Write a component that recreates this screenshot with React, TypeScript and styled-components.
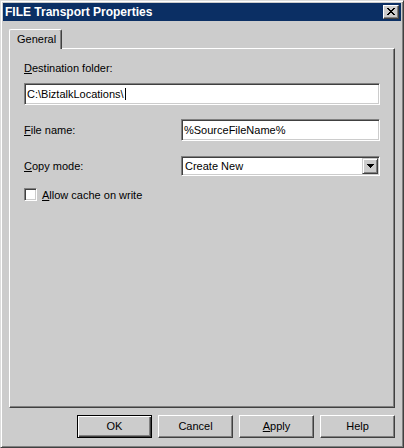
import React from "react";
import styled, { createGlobalStyle } from "styled-components";

const face = "#cccccc";

const GlobalStyle = createGlobalStyle`
  html, body {
    margin: 0;
    padding: 0;
    background: ${face};
  }
  body {
    font-family: "Liberation Sans", Arial, sans-serif;
    font-size: 11px;
    color: #000;
  }
`;

const Window = styled.div`
  width: 404px;
  height: 448px;
  box-sizing: border-box;
  background: ${face};
  border: 1px solid;
  border-color: #dcdcdc #404040 #404040 #dcdcdc;
  box-shadow: inset 1px 1px #fff, inset -1px -1px #808080;
  padding: 2px;
  display: flex;
  flex-direction: column;
`;

const TitleBar = styled.div`
  height: 18px;
  flex-shrink: 0;
  background: #0b2f64;
  color: #fff;
  display: flex;
  align-items: center;
  justify-content: space-between;
  padding: 0 2px;
  font-weight: bold;
  font-size: 12px;
`;

const TitleText = styled.span`
  white-space: nowrap;
`;

const CloseButton = styled.div`
  width: 16px;
  height: 14px;
  box-sizing: border-box;
  background: ${face};
  border: 1px solid;
  border-color: #fff #404040 #404040 #fff;
  box-shadow: inset -1px -1px #808080;
  display: flex;
  align-items: center;
  justify-content: center;
  padding: 0 0 1px 0;
`;

const Body = styled.div`
  flex: 1;
  display: flex;
  flex-direction: column;
  padding: 8px 6px 0 6px;
`;

const TabStrip = styled.div`
  display: flex;
`;

const Tab = styled.div`
  position: relative;
  z-index: 1;
  width: 53px;
  height: 20px;
  box-sizing: border-box;
  margin-bottom: -1px;
  padding: 0 0 1px 7px;
  background: ${face};
  border-top: 1px solid #fff;
  border-left: 1px solid #fff;
  border-right: 1px solid #404040;
  border-radius: 2px 2px 0 0;
  box-shadow: inset -1px 0 #808080;
  display: flex;
  align-items: center;
`;

const Panel = styled.div`
  height: 360px;
  box-sizing: border-box;
  border: 1px solid;
  border-color: #fff #404040 #404040 #fff;
  box-shadow: inset -1px -1px #808080;
  padding: 13px 14px 0 14px;
  display: flex;
  flex-direction: column;
`;

const Label = styled.div<{ $width?: number }>`
  line-height: 13px;
  white-space: nowrap;
  ${(p) => (p.$width ? `width: ${p.$width}px; flex-shrink: 0;` : "")}
`;

const sunken = `
  box-sizing: border-box;
  background: #fff;
  border: 1px solid;
  border-color: #808080 #fff #fff #808080;
  box-shadow: inset 1px 1px #404040, inset -1px -1px ${face};
`;

const Edit = styled.div<{ $top?: number }>`
  ${sunken}
  height: 22px;
  margin-top: ${(p) => p.$top ?? 0}px;
  padding: 0 2px;
  display: flex;
  align-items: center;
  white-space: nowrap;
  flex: 1;
`;

const Caret = styled.span`
  display: inline-block;
  width: 1px;
  height: 12px;
  background: #000;
  margin-left: 1px;
`;

const FieldRow = styled.div<{ $top: number }>`
  display: flex;
  align-items: center;
  margin-top: ${(p) => p.$top}px;
`;

const Combo = styled.div`
  ${sunken}
  flex: 1;
  height: 20px;
  padding: 1px;
  display: flex;
  align-items: center;
`;

const ComboText = styled.span`
  flex: 1;
  padding-left: 2px;
`;

const DropButton = styled.div`
  width: 16px;
  height: 16px;
  box-sizing: border-box;
  background: ${face};
  border: 1px solid;
  border-color: ${face} #404040 #404040 ${face};
  box-shadow: inset 1px 1px #fff, inset -1px -1px #808080;
  display: flex;
  align-items: center;
  justify-content: center;
`;

const CheckRow = styled.label`
  display: flex;
  align-items: center;
  margin-top: 12px;
  gap: 5px;
`;

const CheckBox = styled.span`
  ${sunken}
  width: 13px;
  height: 13px;
  flex-shrink: 0;
`;

const ButtonRow = styled.div`
  display: flex;
  justify-content: flex-end;
  gap: 6px;
  margin-top: 7px;
`;

const Button = styled.button<{ $default?: boolean }>`
  width: 75px;
  height: 23px;
  box-sizing: border-box;
  margin: 0;
  padding: 0 0 1px 0;
  background: ${face};
  font-family: inherit;
  font-size: 11px;
  color: #000;
  ${(p) =>
    p.$default
      ? `border: 1px solid #000;
         box-shadow: inset 1px 1px #fff, inset -1px -1px #404040, inset -2px -2px #808080;`
      : `border: 1px solid;
         border-color: #fff #404040 #404040 #fff;
         box-shadow: inset -1px -1px #808080;`}
`;

const CloseGlyph = () => (
  <svg width="8" height="7" viewBox="0 0 8 7" shapeRendering="crispEdges">
    <path
      fill="#000"
      d="M0 0h2v1h-2zM6 0h2v1h-2zM1 1h2v1h-2zM5 1h2v1h-2zM2 2h4v1h-4zM3 3h2v1h-2zM2 4h4v1h-4zM1 5h2v1h-2zM5 5h2v1h-2zM0 6h2v1h-2zM6 6h2v1h-2z"
    />
  </svg>
);

const ArrowGlyph = () => (
  <svg width="7" height="4" viewBox="0 0 7 4" shapeRendering="crispEdges">
    <path fill="#000" d="M0 0h7v1h-7zM1 1h5v1h-5zM2 2h3v1h-3zM3 3h1v1h-1z" />
  </svg>
);

const App: React.FC = () => {
  return (
    <>
      <GlobalStyle />
      <Window>
        <TitleBar>
          <TitleText>FILE Transport Properties</TitleText>
          <CloseButton>
            <CloseGlyph />
          </CloseButton>
        </TitleBar>

        <Body>
          <TabStrip>
            <Tab>General</Tab>
          </TabStrip>

          <Panel>
            <Label>
              <u>D</u>estination folder:
            </Label>
            <FieldRow $top={8}>
              <Edit>
                C:\BiztalkLocations\
                <Caret />
              </Edit>
            </FieldRow>

            <FieldRow $top={14}>
              <Label $width={157}>
                <u>F</u>ile name:
              </Label>
              <Edit>%SourceFileName%</Edit>
            </FieldRow>

            <FieldRow $top={15}>
              <Label $width={157}>
                <u>C</u>opy mode:
              </Label>
              <Combo>
                <ComboText>Create New</ComboText>
                <DropButton>
                  <ArrowGlyph />
                </DropButton>
              </Combo>
            </FieldRow>

            <CheckRow>
              <CheckBox />
              <span>
                <u>A</u>llow cache on write
              </span>
            </CheckRow>
          </Panel>

          <ButtonRow>
            <Button $default>OK</Button>
            <Button>Cancel</Button>
            <Button>
              <u>A</u>pply
            </Button>
            <Button>Help</Button>
          </ButtonRow>
        </Body>
      </Window>
    </>
  );
};

export default App;
